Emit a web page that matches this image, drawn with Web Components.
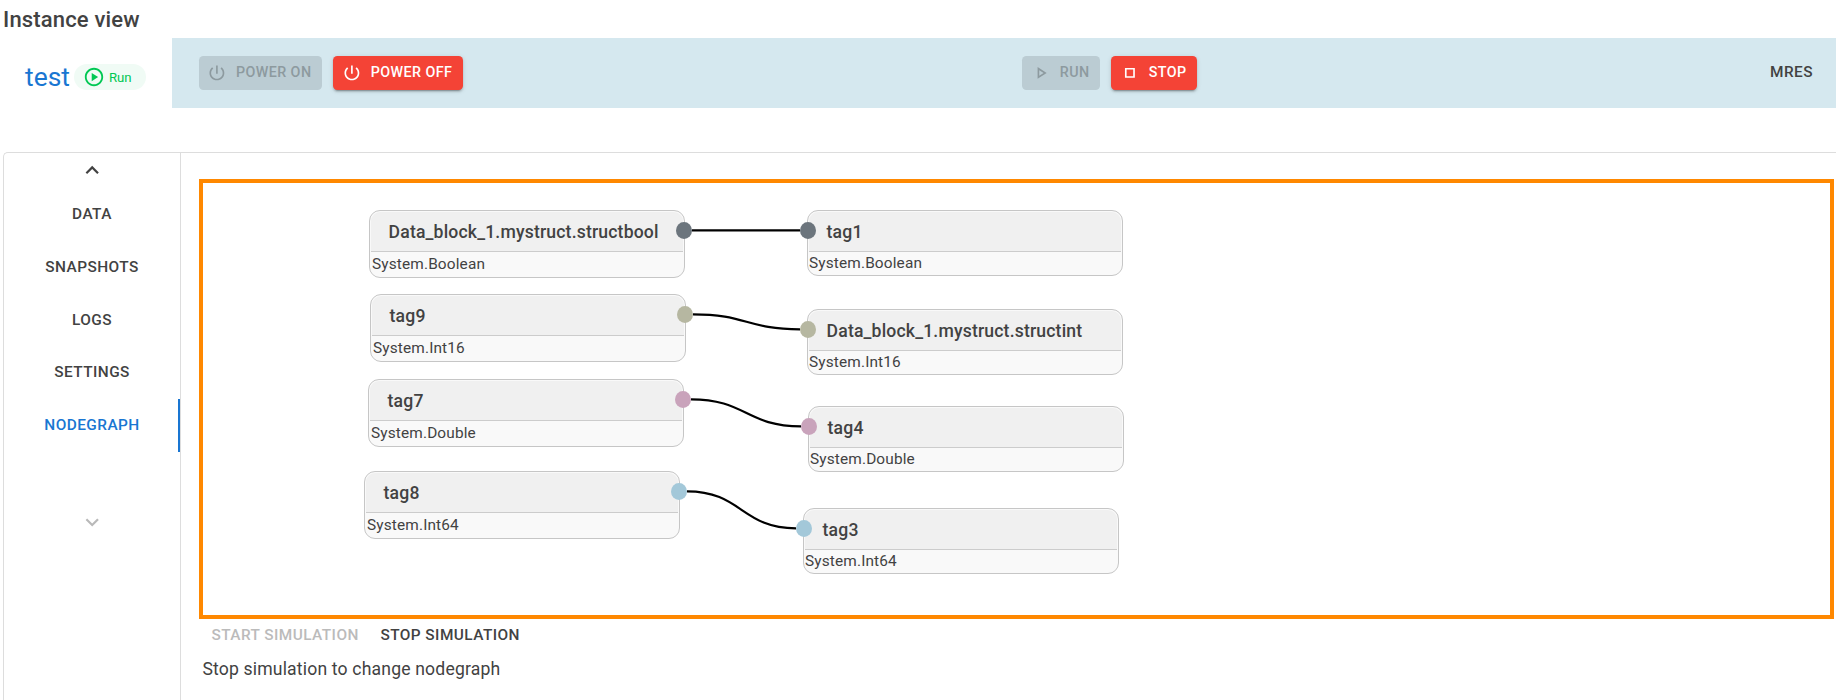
<!DOCTYPE html>
<html lang="en"><head><meta charset="utf-8"><title>Instance view</title>
<style>
body{margin:0;background:#fff;color:#424242;font-family:Roboto,sans-serif}
</style></head><body>
<instance-page></instance-page>
<script>
const define=(name,html,setup)=>customElements.define(name,class extends HTMLElement{
  connectedCallback(){
    if(this.shadowRoot)return;
    const t=document.createElement('template');
    t.innerHTML=typeof html==='function'?html(this):html;
    this.attachShadow({mode:'open'}).append(t.content.cloneNode(true));
    if(setup)setup(this,this.shadowRoot);
  }
});

const icons={
  power:'<path d="M13 3h-2v10h2V3zm4.83 2.17l-1.42 1.42C17.99 7.86 19 9.81 19 12c0 3.87-3.13 7-7 7s-7-3.13-7-7c0-2.19 1.01-4.14 2.58-5.42L6.17 5.17C4.23 6.82 3 9.26 3 12c0 4.97 4.03 9 9 9s9-4.03 9-9c0-2.74-1.23-5.18-3.17-6.83z"/>',
  play:'<path d="M10 8.64L15.27 12 10 15.36V8.64M8 5v14l11-7L8 5z"/>',
  stop:'<path d="M16 8v8H8V8h8m2-2H6v12h12V6z"/>',
  circle:'<path d="M12 2C6.48 2 2 6.48 2 12s4.48 10 10 10 10-4.48 10-10S17.52 2 12 2zm0 18c-4.41 0-8-3.59-8-8s3.59-8 8-8 8 3.59 8 8-3.59 8-8 8zm-2.5-3.5l7-4.5-7-4.5v9z"/>',
  up:'<path d="M7.41 15.41L12 10.83l4.59 4.58L18 14l-6-6-6 6z"/>',
  down:'<path d="M7.41 8.59L12 13.17l4.59-4.58L18 10l-6 6-6-6 1.41-1.41z"/>'
};
define('ui-icon',h=>`<style>:host{display:block;flex:none}svg{display:block;width:100%;height:100%;fill:currentColor}</style><svg viewBox="0 0 24 24">${icons[h.getAttribute('name')]}</svg>`);

define('action-button',h=>`<style>
:host{display:flex;align-items:center;box-sizing:border-box;height:34px;padding:0 0 0 8px;border-radius:4.4px;
 background:#f44336;color:#fff;font:500 14.3px/25px Roboto,sans-serif;letter-spacing:.02857em;white-space:nowrap;
 box-shadow:0 3px 1px -2px rgba(0,0,0,.2),0 2px 2px 0 rgba(0,0,0,.14),0 1px 5px 0 rgba(0,0,0,.12)}
:host([disabled]){background:#bbccd3;color:#8d9a9f;box-shadow:none}
ui-icon{width:19.8px;height:19.8px;margin-right:9.2px}
span{padding-bottom:2px}
</style><ui-icon name="${h.getAttribute('icon')}"></ui-icon><span><slot></slot></span>`);

define('status-chip',`<style>
:host{display:flex;align-items:center;box-sizing:border-box;height:26px;width:72px;padding-left:9px;border-radius:13px;background:#f0fbf5;color:#00c853;font-size:13.2px}
ui-icon{width:22px;height:22px;margin-right:4px}
</style><ui-icon name="circle"></ui-icon><slot></slot>`);

define('side-tab',`<style>
:host{display:flex;align-items:center;justify-content:center;box-sizing:border-box;height:52.8px;border-right:2px solid transparent;padding-left:2px;
 font-weight:500;font-size:15.4px;letter-spacing:.02857em}
:host([active]){color:#1976d2;border-color:#1976d2}
</style><slot></slot>`);

define('graph-node',`<style>
:host{position:absolute;box-sizing:border-box;width:316px;height:68px;border:1px solid #c6c6c6;border-radius:11px;background:#f9f9f9;padding:1px}
:host([side=in]){height:66px}
header{box-sizing:border-box;height:40px;border-bottom:1px solid #ccc;border-radius:9px 9px 0 0;background:#f0f0f0;padding:1px 0 0 17.6px;font-weight:500;font-size:17.6px;line-height:39px;letter-spacing:.00938em}
div{font-size:15.4px;line-height:22px;letter-spacing:.00938em;padding:1px 0 0 1px}
:host([side=in]) div{padding:0}
i{position:absolute;top:11px;right:-8px;width:16px;height:17px;border-radius:50%;background:var(--port)}
:host([side=in]) i{right:auto;left:-8px}
</style><header><slot></slot></header><div></div><i></i>`,(h,s)=>{
  h.style.left=h.getAttribute('x')+'px';h.style.top=h.getAttribute('y')+'px';
  const type=h.getAttribute('type');
  s.querySelector('div').textContent='System.'+type;
  h.style.setProperty('--port',{Boolean:'#6c757d',Int16:'#b6b7a1',Double:'#c9a3bb',Int64:'#a3c8d9'}[type]);
});

define('node-canvas',`<style>
:host{display:block;position:relative;box-sizing:border-box;width:1635px;height:440px;border:4px solid #ff8800}
svg{position:absolute;left:0;top:0;width:1627px;height:432px}
path{fill:none;stroke:#000;stroke-width:2.2}
</style><svg></svg><slot></slot>`,(h,s)=>{
  const links=[[489,47.4,597,47.4],[490,131.3,597,146.3],[488,216.3,598,243.3],[484,308.3,593,345.3]];
  s.querySelector('svg').innerHTML=links.map(([a,b,c,d])=>`<path d="M${a} ${b}C${(a+c)/2} ${b} ${(a+c)/2} ${d} ${c} ${d}"/>`).join('');
});

define('instance-page',`<style>
:host{display:flex;flex-direction:column;height:700px;overflow:hidden}
h1{margin:0;height:38px;box-sizing:border-box;padding-left:3px;font-weight:500;font-size:22px;line-height:39px;letter-spacing:.0075em}
.bar{display:flex;height:70px}
.name{display:flex;align-items:center;box-sizing:border-box;width:172px;padding:8px 0 0 25px;font-size:26.4px;color:#1976d2}
status-chip{margin-left:4px}
.tools{flex:1;display:flex;padding:18px 23px 0 27px;background:#d5e8ef}
.tools>*+*{margin-left:11px}
.tools action-button+action-button{padding-left:8.8px}
.tools action-button:nth-child(1){width:123px}
.tools action-button:nth-child(2){width:130px}
.tools action-button:nth-child(3){width:78px;margin-left:559px}
.tools action-button:nth-child(4){width:86px}
.mres{margin-left:auto;font-weight:500;font-size:15.4px;line-height:32px;letter-spacing:.02857em}
.panel{flex:1;display:flex;margin:44px 0 0 3px;border:solid #ddd;border-width:1px 0 0 1px;border-radius:5px 0 0 0}
nav{width:176px;border-right:1px solid #ddd;display:flex;flex-direction:column}
.arrow{display:flex;justify-content:center;align-items:center;height:34.56px}
.arrow ui-icon{width:26.4px;height:26.4px}
.arrow.off{color:#b9b9b9;margin-top:53.6px}
main{padding:26px 0 0 18px}
.sim{display:flex;gap:21.6px;padding-left:12.4px;font-weight:500;font-size:15.4px;line-height:32px;letter-spacing:.02857em}
.off{color:#bbb}
p{margin:0;padding:1px 0 0 3.4px;font-size:17.6px;line-height:34px;letter-spacing:.00938em}
</style>
<h1>Instance view</h1>
<div class="bar"><div class="name"><span>test</span><status-chip>Run</status-chip></div>
<div class="tools"><action-button icon="power" disabled>POWER ON</action-button><action-button icon="power">POWER OFF</action-button><action-button icon="play" disabled>RUN</action-button><action-button icon="stop">STOP</action-button><span class="mres">MRES</span></div></div>
<div class="panel"><nav><div class="arrow"><ui-icon name="up"></ui-icon></div>
<side-tab>DATA</side-tab><side-tab>SNAPSHOTS</side-tab><side-tab>LOGS</side-tab><side-tab>SETTINGS</side-tab><side-tab active>NODEGRAPH</side-tab>
<div class="arrow off"><ui-icon name="down"></ui-icon></div></nav>
<main><node-canvas>
<graph-node x="166" y="27" type="Boolean">Data_block_1.mystruct.structbool</graph-node>
<graph-node x="167" y="111" type="Int16">tag9</graph-node>
<graph-node x="165" y="196" type="Double">tag7</graph-node>
<graph-node x="161" y="288" type="Int64">tag8</graph-node>
<graph-node side="in" x="604" y="27" type="Boolean">tag1</graph-node>
<graph-node side="in" x="604" y="126" type="Int16">Data_block_1.mystruct.structint</graph-node>
<graph-node side="in" x="605" y="223" type="Double">tag4</graph-node>
<graph-node side="in" x="600" y="325" type="Int64">tag3</graph-node>
</node-canvas>
<div class="sim"><span class="off">START SIMULATION</span><span>STOP SIMULATION</span></div>
<p>Stop simulation to change nodegraph</p></main></div>`);
</script></body></html>
